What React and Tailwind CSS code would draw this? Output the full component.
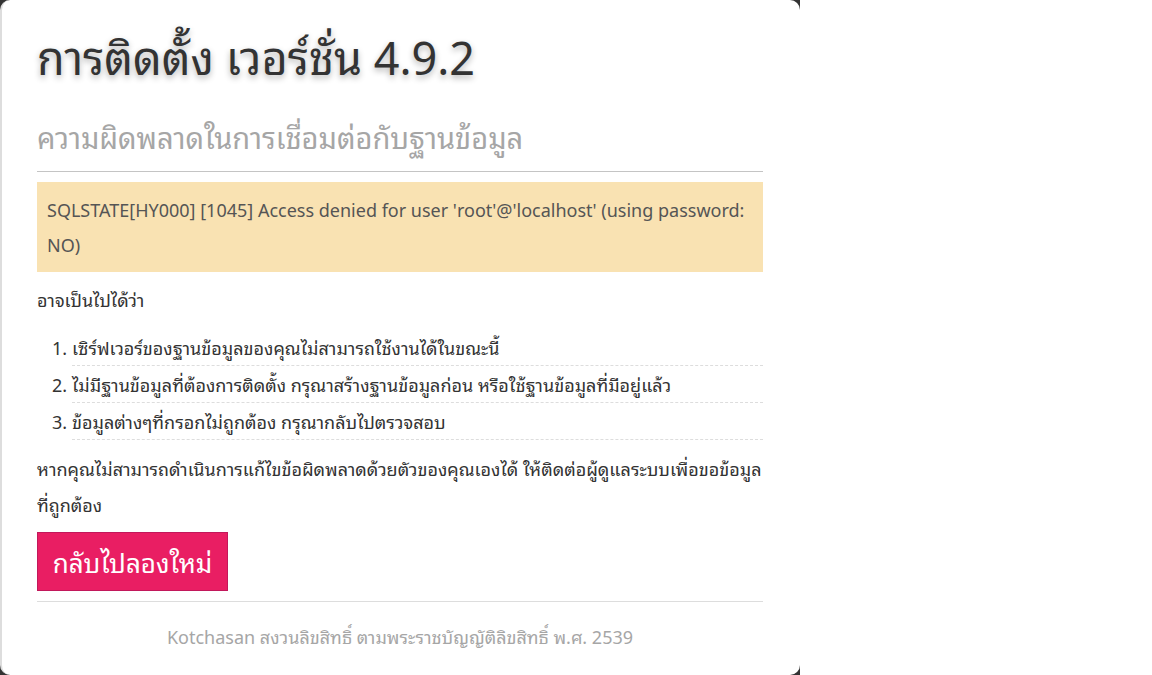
export default function App() {
  const font = { fontFamily: '"Noto Sans Thai Looped", "Loma", "Garuda", "Noto Sans", "Noto Sans Thai", "Open Sans", sans-serif' };
  return (
    <div className="w-[1152px] h-[675px] bg-white flex" style={font}>
      <div className="w-[800px] h-[675px] bg-[#333]">
        <div className="h-full bg-white rounded-[10px] border-l-2 border-[#ddd] pl-[35px] pr-[37px] pt-[18px]">
          <h1 className="text-[45px] leading-[74px] text-[#333] [text-shadow:0_3px_6px_rgba(0,0,0,0.3)]">การติดตั้ง เวอร์ชั่น 4.9.2</h1>
          <h2 className="mt-[19px] text-[29px] leading-[50px] text-[#a6a6a6] pb-[10px] border-b border-[#c4c4c4]">ความผิดพลาดในการเชื่อมต่อกับฐานข้อมูล</h2>
          <div className="mt-[10px] bg-[#f9e2b2] px-[10px] py-[10px] text-[18px] leading-[35px] text-[#555]">
            SQLSTATE[HY000] [1045] Access denied for user 'root'@'localhost' (using password: NO)
          </div>
          <p className="mt-[9px] text-[18px] leading-[36px] text-[#333]">อาจเป็นไปได้ว่า</p>
          <ol className="mt-[12px] pl-[35px] text-[18px] text-[#333]">
            {[
              'เซิร์ฟเวอร์ของฐานข้อมูลของคุณไม่สามารถใช้งานได้ในขณะนี้',
              'ไม่มีฐานข้อมูลที่ต้องการติดตั้ง กรุณาสร้างฐานข้อมูลก่อน หรือใช้ฐานข้อมูลที่มีอยู่แล้ว',
              'ข้อมูลต่างๆที่กรอกไม่ถูกต้อง กรุณากลับไปตรวจสอบ',
            ].map((t, i) => (
              <li key={i} className="flex leading-[36px] border-b border-dashed border-[#ddd]">
                <span className="w-0 relative"><span className="absolute right-[5px]">{i + 1}.</span></span>
                <span>{t}</span>
              </li>
            ))}
          </ol>
          <p className="mt-[10px] text-[18px] leading-[36px] text-[#333]">หากคุณไม่สามารถดำเนินการแก้ไขข้อผิดพลาดด้วยตัวของคุณเองได้ ให้ติดต่อผู้ดูแลระบบเพื่อขอข้อมูลที่ถูกต้อง</p>
          <button className="mt-[10px] h-[59px] w-[191px] bg-[#e91e63] border border-[#c2185b] text-white text-[26px]">กลับไปลองใหม่</button>
          <div className="mt-[10px] border-t border-[#ddd] pt-[20px] text-center text-[18px] leading-[28px] text-[#a6a6a6]">Kotchasan สงวนลิขสิทธิ์ ตามพระราชบัญญัติลิขสิทธิ์ พ.ศ. 2539</div>
        </div>
      </div>
    </div>
  );
}
